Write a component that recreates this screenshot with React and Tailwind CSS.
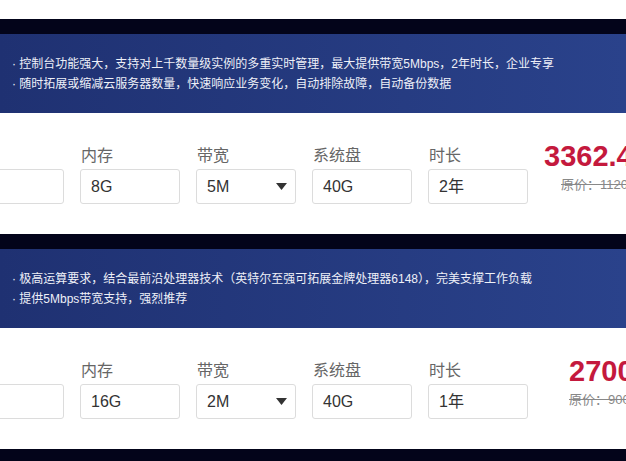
const plans = [
    {
        lines: [
            "控制台功能强大，支持对上千数量级实例的多重实时管理，最大提供带宽5Mbps，2年时长，企业专享",
            "随时拓展或缩减云服务器数量，快速响应业务变化，自动排除故障，自动备份数据",
        ],
        cpu: "2核",
        memory: "8G",
        bandwidth: "5M",
        disk: "40G",
        duration: "2年",
        price: "3362.40",
        original: "原价：11208.00",
        priceClass: "pl-0",
        originalClass: "pl-[17px]",
    },
    {
        lines: [
            "极高运算要求，结合最前沿处理器技术（英特尔至强可拓展金牌处理器6148），完美支撑工作负载",
            "提供5Mbps带宽支持，强烈推荐",
        ],
        cpu: "4核",
        memory: "16G",
        bandwidth: "2M",
        disk: "40G",
        duration: "1年",
        price: "2700.00",
        original: "原价：9000.00",
        priceClass: "pl-[25px]",
        originalClass: "pl-[25px]",
    },
];

const Field = ({ label, value, select }) => (
    <div className="w-[100px] shrink-0 flex flex-col">
        <div className="text-[16px] leading-[22px] text-[#666666] pl-[1px]">{label}</div>
        <div className="mt-[2px] h-[35px] border border-[#dcdcdc] rounded-[3px] bg-white flex items-center justify-between pl-[10px] pr-[8px] text-[16px] text-[#333333]">
            <span>{value}</span>
            {select && (
                <svg width="11" height="7" viewBox="0 0 11 7">
                    <polygon points="0,0 11,0 5.5,7" fill="#333333" />
                </svg>
            )}
        </div>
    </div>
);

const PlanCard = ({ plan }) => (
    <div>
        <div className="h-[15px] bg-[#03041a]" />
        <div className="h-[79px] bg-gradient-to-r from-[#1f3172] to-[#2a428b] flex flex-col justify-center pl-[12px] text-[12px] leading-[20px] text-[#eef0f8]">
            {plan.lines.map((line) => (
                <div key={line} className="whitespace-nowrap">· {line}</div>
            ))}
        </div>
        <div className="h-[121px] bg-white pt-[32px] flex gap-[16px] -ml-[36px]">
            <Field label="CPU" value={plan.cpu} />
            <Field label="内存" value={plan.memory} />
            <Field label="带宽" value={plan.bandwidth} select />
            <Field label="系统盘" value={plan.disk} />
            <Field label="时长" value={plan.duration} />
            <div className="shrink-0 flex flex-col whitespace-nowrap">
                <div className={`text-[29px] leading-[22px] font-bold text-[#c4193d] ${plan.priceClass}`}>
                    {plan.price}
                </div>
                <div className={`mt-[9px] text-[13px] leading-[18px] text-[#888888] line-through ${plan.originalClass}`}>
                    {plan.original}
                </div>
            </div>
        </div>
    </div>
);

export default function App() {
    return (
        <div
            className="w-[626px] h-[461px] overflow-hidden bg-[#03041a]"
            style={{ fontFamily: '"Liberation Sans", "Noto Sans CJK SC", sans-serif' }}
        >
            <div className="h-[19px] bg-white" />
            {plans.map((plan) => (
                <PlanCard key={plan.price} plan={plan} />
            ))}
        </div>
    );
}
